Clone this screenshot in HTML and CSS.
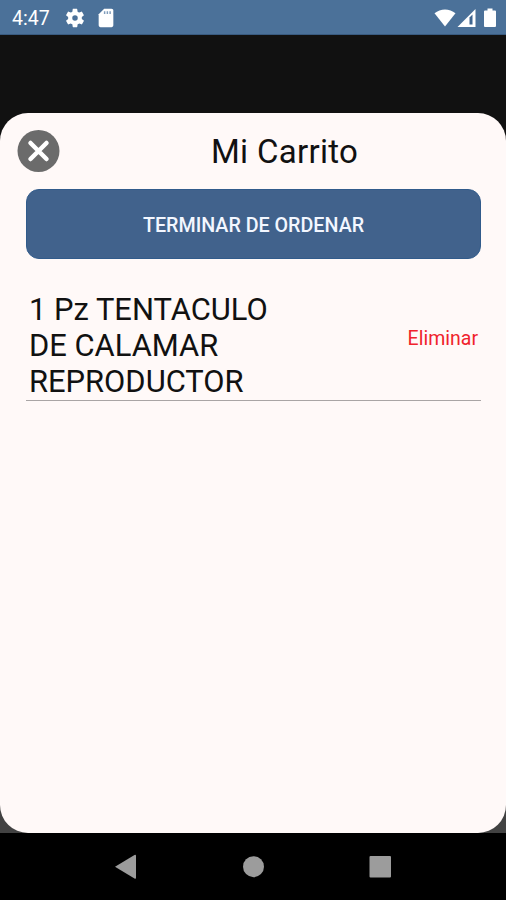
FILE: index.html
```html
<!DOCTYPE html>
<html lang="es">
<head>
  <meta charset="UTF-8" />
  <meta name="viewport" content="width=device-width, initial-scale=1.0" />
  <title>Mi Carrito</title>
  <link rel="stylesheet" href="styles.css">
</head>
<body>
  <header class="status-bar">
    <span class="clock">4:47</span>
    <svg class="icon-gear" width="22" height="22" viewBox="0 0 24 24" fill="#fff">
      <path d="M19.4 13c.04-.3.06-.66.06-1s-.02-.7-.07-1l2.1-1.63c.2-.15.24-.42.12-.64l-2-3.46c-.12-.22-.38-.3-.6-.22l-2.49 1c-.52-.4-1.08-.73-1.69-.98l-.38-2.65A.49.49 0 0 0 14 2h-4c-.25 0-.46.18-.49.42l-.38 2.65c-.61.25-1.17.59-1.69.98l-2.49-1c-.23-.09-.49 0-.61.22l-2 3.46c-.13.22-.07.49.12.64L4.57 11c-.05.3-.07.66-.07 1s.02.7.07 1l-2.11 1.63c-.19.15-.24.42-.12.64l2 3.46c.12.22.39.3.61.22l2.49-1c.52.4 1.08.73 1.69.98l.38 2.65c.03.24.24.42.49.42h4c.25 0 .46-.18.49-.42l.38-2.65c.61-.25 1.17-.59 1.69-.98l2.49 1c.23.09.49 0 .61-.22l2-3.46c.12-.22.07-.49-.12-.64zM12 15a3 3 0 1 1 0-6 3 3 0 0 1 0 6z" />
    </svg>
    <svg class="icon-sd" width="22" height="22" viewBox="0 0 24 24" fill="#fff">
      <path d="M18 2h-8L4 8v12c0 1.1.9 2 2 2h12c1.1 0 2-.9 2-2V4c0-1.1-.9-2-2-2z" />
      <path d="M10.500 4.500v3M13.500 4.500v3M16.500 4.500v3" stroke="#7f9cbb" stroke-width="1.600" />
    </svg>
    <div class="status-right">
      <svg width="22" height="20" viewBox="0 0 22 20" fill="#fff">
        <path d="M.5 5.300C6.500.200 15.500.200 21.500 5.300L11 18.500z" />
      </svg>
      <svg width="20" height="20" viewBox="0 0 20 20">
        <path d="M.5 19L18.500 1v18z" fill="#fff" />
        <path d="M12.500 9.500L15.500 6.500v10h-3z" fill="#3f658f" />
      </svg>
      <svg width="12" height="20" viewBox="0 0 12 20" fill="#fff">
        <path d="M3.500.500h5v2H11q1 0 1 1V18q0 1-1 1H1q-1 0-1-1V3.500q0-1 1-1h2.500z" />
      </svg>
    </div>
  </header>

  <main class="backdrop">
    <section class="sheet">
      <div class="sheet-header">
        <button class="close" aria-label="Cerrar">
          <svg width="43" height="42" viewBox="0 0 43 42">
            <circle cx="21.500" cy="21" r="21" fill="#6b6b6b" />
            <path d="M13.500 13l16 16M29.500 13l-16 16" stroke="#fff" stroke-width="4.500" stroke-linecap="round" />
          </svg>
        </button>
        <h1>Mi Carrito</h1>
      </div>
      <button class="order">TERMINAR DE ORDENAR</button>
      <div class="item">
        <p>1 Pz TENTACULO<br />DE CALAMAR<br />REPRODUCTOR</p>
        <a class="remove">Eliminar</a>
      </div>
    </section>
  </main>

  <nav class="nav-bar">
    <svg width="506" height="67" viewBox="0 0 506 67" fill="#9c9c9c">
      <path d="M115 33.700L134.500 22q1.500-.8 1.500.8v22q0 1.600-1.500.8z" />
      <circle cx="253.500" cy="33.700" r="10.500" />
      <rect x="369.500" y="23" width="21.500" height="21.500" rx="1" />
    </svg>
  </nav>
</body>
</html>
```

FILE: styles.css
```css
* {
  box-sizing: border-box;
}

body {
  margin: 0;
  height: 900px;
  display: flex;
  flex-direction: column;
  font-family: Roboto, sans-serif;
  background: #000;
  color: #111;
  overflow: hidden;
}

.status-bar {
  height: 35px;
  display: flex;
  align-items: center;
  padding: 1px 10px 0 12px;
  background: #4b7199;
  border-bottom: 1px solid #395b80;
  color: #fff;
}

.clock {
  width: 52px;
  font-size: 19.5px;
  line-height: 32px;
  padding-top: 2px;
}

.icon-sd {
  margin-left: 9px;
}

.status-right {
  display: flex;
  align-items: center;
  gap: 2px;
  margin-left: auto;
}

.status-right svg:first-child {
  margin-right: -1px;
}

.status-right svg:last-child {
  margin-left: 5px;
}

.backdrop {
  height: 798px;
  padding-top: 78px;
  background: linear-gradient(#111 0, #111 400px, #424242 400px);
}

.sheet {
  height: 720px;
  padding: 17px 25px 0 26px;
  background: #fff9f8;
  border-radius: 28px;
}

.sheet-header {
  height: 42px;
  display: flex;
  align-items: center;
  margin-left: -9px;
}

.close {
  width: 43px;
  height: 42px;
  padding: 0;
  border: 0;
  background: none;
}

.close svg {
  display: block;
}

h1 {
  margin: 0 0 0 151px;
  padding-top: 2px;
  font-size: 33px;
  font-weight: 400;
  letter-spacing: 0.3px;
  line-height: 42px;
  white-space: nowrap;
}

.order {
  display: block;
  width: 100%;
  height: 70px;
  margin-top: 17px;
  padding: 2px 0 0;
  border: 1px solid #315b8b;
  border-radius: 13px;
  background: #41628c;
  color: #f3f7ff;
  font-family: inherit;
  font-size: 19.7px;
  font-weight: 500;
}

.item {
  height: 109px;
  display: flex;
  justify-content: space-between;
  margin-top: 33px;
  padding: 0 3px;
  border-bottom: 1px solid #a9a5a5;
}

.item p {
  margin: 0;
  font-size: 30.9px;
  line-height: 36px;
  white-space: nowrap;
}

.remove {
  margin-top: 35px;
  color: #f0232d;
  font-size: 19.5px;
  line-height: 24px;
}

.nav-bar {
  height: 67px;
}

.nav-bar svg {
  display: block;
}
```
